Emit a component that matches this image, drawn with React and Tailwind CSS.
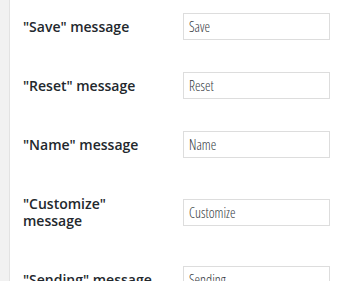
const rows = [
  { label: '"Save" message', value: "Save" },
  { label: '"Reset" message', value: "Reset" },
  { label: '"Name" message', value: "Name" },
  { label: '"Customize" message', value: "Customize" },
  { label: '"Sending" message', value: "Sending" },
];

export default function App() {
  return (
    <div className="flex h-[281px] w-[342px] overflow-hidden bg-white font-['Open_Sans',sans-serif]">
      <div className="w-[10px] shrink-0 border-r border-[#e2e2e2] bg-[#f1f1f1]" />
      <div className="-mt-[3px] flex-1">
        {rows.map((r) => (
          <div key={r.value} className="flex items-center">
            <div className="w-[173px] shrink-0 py-[21px] pl-[13px] pr-[22px] text-[14px] font-semibold leading-[17px] text-[#23282d]">
              {r.label}
            </div>
            <input
              readOnly
              value={r.value}
              className="h-[27px] w-[147px] border border-[#dddddd] bg-white px-[5px] text-[14px] font-light text-[#32373c] outline-none [font-stretch:75%]"
            />
          </div>
        ))}
      </div>
    </div>
  );
}
